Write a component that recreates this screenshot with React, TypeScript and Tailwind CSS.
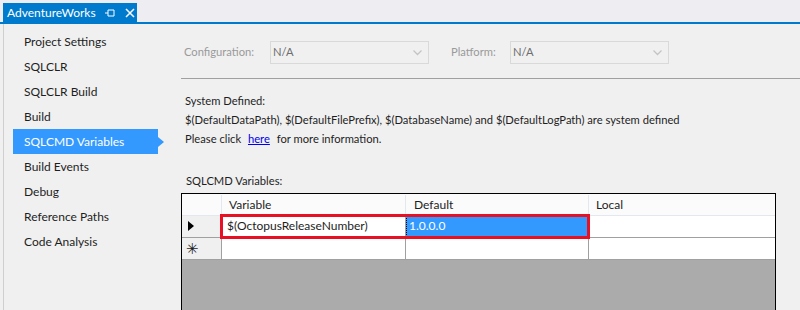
import React from "react";

const navItems = [
  "Project Settings",
  "SQLCLR",
  "SQLCLR Build",
  "Build",
  "SQLCMD Variables",
  "Build Events",
  "Debug",
  "Reference Paths",
  "Code Analysis",
];

const font = { fontFamily: 'Lato, "Noto Sans", sans-serif' };

function Dropdown({ className }: { className: string }) {
  return (
    <div className={`flex h-[23px] items-center justify-between border border-[#d9d9d9] bg-[#f0f0f0] pl-[2px] pr-[6px] text-[#6d6d6d] ${className}`}>
      <span>N/A</span>
      <svg width="9" height="6" viewBox="0 0 9 6" className="mt-[1px]">
        <path d="M0.5 0.5 L4.5 4.5 L8.5 0.5" fill="none" stroke="#c4c4c4" strokeWidth="1.3" />
      </svg>
    </div>
  );
}

export default function App() {
  return (
    <div className="h-[310px] w-[800px] overflow-hidden bg-[#f0f0f0] text-[11.2px] text-[#1e1e1e]" style={font}>
      {/* tab strip */}
      <div className="flex h-[24px] items-end border-b-2 border-[#007acc] bg-[#eeeef2] pl-[3px]">
        <div className="flex h-[19px] w-[134px] items-center bg-[#007acc] pl-[4px] text-white">
          <span className="w-[98px] text-[12px] leading-none">AdventureWorks</span>
          <svg width="10" height="10" viewBox="0 0 10 10">
            <path d="M0 5 H3 M3 2 V8 M3 2 H9 M3 8 H9 M9 2 V8" fill="none" stroke="white" strokeWidth="1" />
          </svg>
          <svg width="10" height="10" viewBox="0 0 10 10" className="ml-[10px]">
            <path d="M1 1 L9 9 M9 1 L1 9" stroke="white" strokeWidth="1.5" />
          </svg>
        </div>
      </div>

      <div className="flex h-[286px]">
        {/* left nav */}
        <div className="ml-[3px] w-[176px] shrink-0 border-l border-[#cfcfcf] pt-[5px] text-[12px]">
          {navItems.map((item) =>
            item === "SQLCMD Variables" ? (
              <div key={item} className="relative ml-[9px] flex h-[25px] w-[145px] items-center bg-[#3399ff] pl-[11px] text-white">
                {item}
                <div className="absolute left-full top-[8px] h-0 w-0 border-y-[5px] border-l-[6px] border-y-transparent border-l-[#3399ff]" />
              </div>
            ) : (
              <div key={item} className="flex h-[25px] items-center pl-[20px]">
                {item}
              </div>
            )
          )}
        </div>

        {/* right content */}
        <div className="flex min-w-0 flex-1 flex-col pl-[2px]">
          <div className="flex items-center pt-[17px] pb-[14px] pl-[3px] text-[#9a9a9a]">
            <span className="w-[86px]">Configuration:</span>
            <Dropdown className="w-[159px]" />
            <span className="ml-[22px] w-[59px]">Platform:</span>
            <Dropdown className="w-[159px]" />
          </div>
          <div className="h-px bg-[#a0a0a0]" />

          <div className="pl-[4px] pt-[12px] leading-[19px]">
            <div>System Defined:</div>
            <div>$(DefaultDataPath), $(DefaultFilePrefix), $(DatabaseName) and $(DefaultLogPath) are system defined</div>
            <div>
              Please click <span className="ml-[4px] mr-[4px] text-[#0000ee] underline">here</span> for more information.
            </div>
          </div>

          <div className="pl-[5px] pt-[25px]">SQLCMD Variables:</div>

          <div className="mt-[3px] w-[595px] flex-1 border border-b-0 border-black bg-[#ababab] text-[12px]">
            {/* header */}
            <div className="flex h-[22px] border-b border-[#e3e8f0] bg-[#fbfbfb] pt-[1px]">
              <div className="w-[40px] border-r border-[#e3e8f0]" />
              <div className="flex w-[184px] items-center border-r border-[#e3e8f0] pl-[7px]">Variable</div>
              <div className="flex w-[183px] items-center border-r border-[#e3e8f0] pl-[8px]">Default</div>
              <div className="flex flex-1 items-center pl-[7px]">Local</div>
            </div>
            {/* row 1 */}
            <div className="relative flex h-[22px] border-b border-[#a0a0a0] bg-white">
              <div className="flex w-[40px] items-center border-r border-[#a0a0a0] bg-[#f0f0f0] pl-[6px]">
                <svg width="6" height="10" viewBox="0 0 6 10">
                  <path d="M0 0 L6 5 L0 10 Z" fill="black" />
                </svg>
              </div>
              <div className="flex w-[184px] items-center border-r border-[#a0a0a0] pl-[5px]">$(OctopusReleaseNumber)</div>
              <div className="flex w-[183px] items-center border-r border-[#a0a0a0] bg-[#3399ff] pl-[3px] text-white outline-1 outline-dotted outline-offset-[-1px] outline-black">
                1.0.0.0
              </div>
              <div className="flex-1" />
              <div className="absolute left-[38px] top-[-2px] h-[25px] w-[370px] border-[3px] border-[#e81123]" />
            </div>
            {/* row 2 */}
            <div className="flex h-[22px] border-b border-[#a0a0a0] bg-white">
              <div className="flex w-[40px] items-center border-r border-[#a0a0a0] bg-[#f0f0f0] pl-[4px] text-[15px] leading-none">
                ✳
              </div>
              <div className="w-[184px] border-r border-[#a0a0a0]" />
              <div className="w-[183px] border-r border-[#a0a0a0]" />
              <div className="flex-1" />
            </div>
          </div>
        </div>
      </div>
    </div>
  );
}
